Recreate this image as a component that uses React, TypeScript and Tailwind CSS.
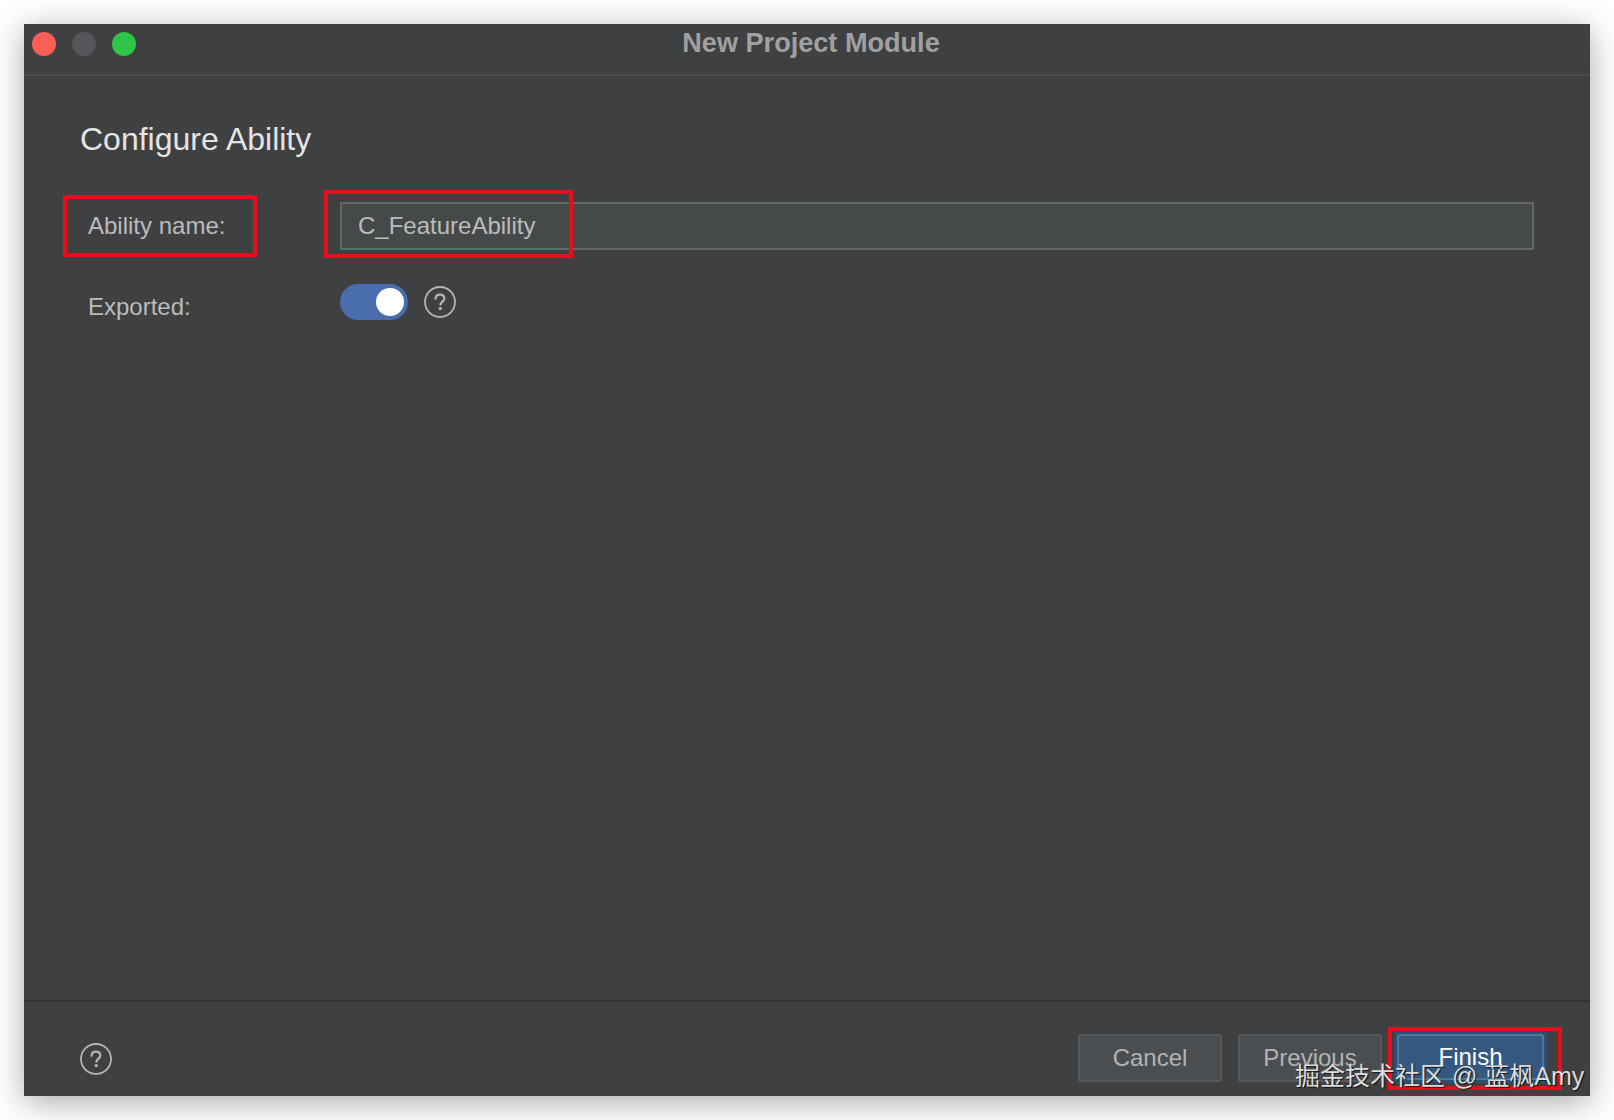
const sans = { fontFamily: '"Liberation Sans", "Noto Sans CJK SC", sans-serif' }

const HelpIcon = () => (
  <svg width="32" height="32" viewBox="0 0 32 32" fill="none" stroke="#b4b4b4" strokeWidth="1.8" className="block">
    <circle cx="16" cy="16" r="15" />
    <path d="M11.6 12.8c0-2.6 2-4.1 4.4-4.1 2.5 0 4.3 1.5 4.3 3.7 0 3-3.6 3.3-3.9 6.3" strokeWidth="2.2" strokeLinecap="round" />
    <circle cx="16.3" cy="22.6" r="1.7" fill="#b4b4b4" stroke="none" />
  </svg>
)

const RedBox = ({ className }: { className: string }) => (
  <div className={`absolute border-4 border-[#e60f1e] pointer-events-none ${className}`} />
)

const App = () => {
  return (
    <div className="relative h-[1120px] w-[1614px] overflow-hidden bg-white p-6" style={sans}>
      <div className="flex h-[1072px] w-[1566px] flex-col bg-[#3f4042] shadow-[0_6px_30px_rgba(0,0,0,0.34)]">
        {/* title bar */}
        <div className="relative flex h-[52px] shrink-0 items-center border-b-2 border-[#4c4d4f] pb-[10px] pl-2">
          <div className="absolute left-2 top-2 flex gap-4">
            <div className="h-6 w-6 rounded-full bg-[#fb5f57]" />
            <div className="h-6 w-6 rounded-full bg-[#55565a]" />
            <div className="h-6 w-6 rounded-full bg-[#2ec548]" />
          </div>
          <div className="w-full pb-[2px] text-center text-[27.1px] font-bold leading-8 text-[#a0a0a0]">
            New Project Module
          </div>
        </div>

        {/* form */}
        <div className="flex-1 px-14 pt-[43px]">
          <h1 className="text-[32px] font-normal leading-10 text-[#e4e4e4]">Configure Ability</h1>

          <div className="mt-[43px] flex h-12 items-center">
            <div className="relative w-[260px] pl-2 text-[24px] leading-8 text-[#bbbbbb]">
              Ability name:
              <RedBox className="-left-[17px] -top-[15px] h-[62px] w-[194px]" />
            </div>
            <div className="relative h-12 flex-1">
              <div className="flex h-12 items-center border-2 border-[#646566] bg-[#46494a] pl-4 text-[24px] text-[#bbbbbb]">
                C_FeatureAbility
              </div>
              <RedBox className="-left-4 -top-3 h-[68px] w-[249px]" />
            </div>
          </div>

          <div className="mt-[34px] flex h-9 items-center">
            <div className="w-[260px] pl-2 pt-[10px] text-[24px] leading-8 text-[#bbbbbb]">Exported:</div>
            <div className="flex h-9 w-[68px] items-center justify-end rounded-full bg-[#4a6dad] pr-[4px]">
              <div className="h-7 w-7 rounded-full bg-white" />
            </div>
            <div className="ml-4">
              <HelpIcon />
            </div>
          </div>
        </div>

        {/* footer */}
        <div className="flex h-[96px] shrink-0 items-start border-t-2 border-[#333436] pl-[56px] pr-[43px]">
          <div className="mt-[41px]">
            <HelpIcon />
          </div>
          <div className="ml-auto mt-[31px] flex items-center gap-4 text-[24px] text-[#b3b3b3]">
            <div className="flex h-12 w-[144px] items-center justify-center rounded-[3px] border-2 border-[#56585a] bg-[#4b4e50]">
              Cancel
            </div>
            <div className="flex h-12 w-[144px] items-center justify-center rounded-[3px] border-2 border-[#56585a] bg-[#4b4e50]">
              Previous
            </div>
            <div className="relative -ml-1 -mt-[2px] h-[52px] w-[153px] rounded-[5px] bg-[#2e4f75] p-[3px]">
              <div className="flex h-full items-center justify-center rounded-[3px] border-2 border-[#4f7898] bg-[#365880] font-normal text-white">
                Finish
              </div>
              <RedBox className="-left-[6px] -top-1 h-[63px] w-[174px]" />
            </div>
          </div>
        </div>
      </div>

      {/* watermark */}
      <div className="absolute left-[1295px] top-[1060px] whitespace-nowrap text-[25px] leading-8 text-[#dcdcdc] [text-shadow:1px_1px_1px_rgba(0,0,0,0.75)]">
        掘金技术社区 @ 蓝枫Amy
      </div>
    </div>
  )
}

export default App
